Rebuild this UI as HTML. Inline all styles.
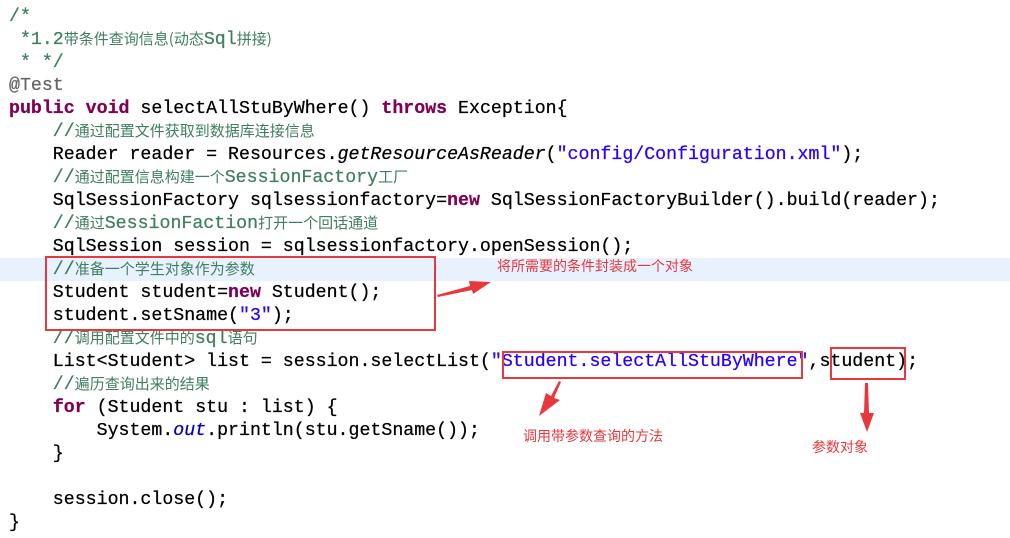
<!DOCTYPE html>
<html><head><meta charset="utf-8"><style>
body{margin:0;width:1010px;height:538px;background:#fff;overflow:hidden;position:relative;font-family:"Liberation Mono",monospace;}
.l{position:absolute;left:9px;height:23px;line-height:23px;font-size:18.25px;color:#000;white-space:pre;-webkit-text-stroke:0.25px currentColor}
.c{color:#3f7f5f}
.z{font-family:"Noto Sans CJK SC",sans-serif;font-size:15px;line-height:1;-webkit-text-stroke:0}
.k{color:#7f0055;font-weight:bold}
.s{color:#2a00ff}
.f{color:#0000c0;font-style:italic}
.hl{position:absolute;left:0;top:258px;width:1010px;height:23px;background:#e8f2fe}
.box{position:absolute;border:2px solid #e8383d}
.a{position:absolute;color:#e8383d;font-family:"Noto Sans CJK SC",sans-serif;font-size:14px}
</style></head><body>
<div class="hl"></div>
<div class="l c" style="top:6px">/*</div>
<div class="l c" style="top:29px"> *1.2<span class="z">带条件查询信息(动态</span>Sql<span class="z">拼接)</span></div>
<div class="l c" style="top:52px"> * */</div>
<div class="l" style="top:75px;color:#646464">@Test</div>
<div class="l" style="top:98px"><span class="k">public</span> <span class="k">void</span> selectAllStuByWhere() <span class="k">throws</span> Exception{</div>
<div class="l c" style="top:121px">    //<span class="z">通过配置文件获取到数据库连接信息</span></div>
<div class="l" style="top:144px">    Reader reader = Resources.<i>getResourceAsReader</i>(<span class="s">"config/Configuration.xml"</span>);</div>
<div class="l c" style="top:167px">    //<span class="z">通过配置信息构建一个</span>SessionFactory<span class="z">工厂</span></div>
<div class="l" style="top:190px">    SqlSessionFactory sqlsessionfactory=<span class="k">new</span> SqlSessionFactoryBuilder().build(reader);</div>
<div class="l c" style="top:213px">    //<span class="z">通过</span>SessionFaction<span class="z">打开一个回话通道</span></div>
<div class="l" style="top:236px">    SqlSession session = sqlsessionfactory.openSession();</div>
<div class="l c" style="top:259px">    //<span class="z">准备一个学生对象作为参数</span></div>
<div class="l" style="top:282px">    Student student=<span class="k">new</span> Student();</div>
<div class="l" style="top:305px">    student.setSname(<span class="s">"3"</span>);</div>
<div class="l c" style="top:328px">    //<span class="z">调用配置文件中的</span>sql<span class="z">语句</span></div>
<div class="l" style="top:351px">    List&lt;Student&gt; list = session.selectList(<span class="s">"Student.selectAllStuByWhere"</span>,student);</div>
<div class="l c" style="top:374px">    //<span class="z">遍历查询出来的结果</span></div>
<div class="l" style="top:397px">    <span class="k">for</span> (Student stu : list) {</div>
<div class="l" style="top:420px">        System.<span class="f">out</span>.println(stu.getSname());</div>
<div class="l" style="top:443px">    }</div>
<div class="l" style="top:489px">    session.close();</div>
<div class="l" style="top:512px">}</div>
<div class="box" style="left:45px;top:256px;width:387px;height:71px"></div>
<div class="box" style="left:502px;top:351px;width:297px;height:24px"></div>
<div class="box" style="left:830px;top:347px;width:72px;height:29px"></div>
<div class="a" style="left:497px;top:256px">将所需要的条件封装成一个对象</div>
<div class="a" style="left:523px;top:426px">调用带参数查询的方法</div>
<div class="a" style="left:812px;top:437px">参数对象</div>
<svg style="position:absolute;left:0;top:0" width="1010" height="538">
<polygon fill="#e8383d" points="437,295 470,286 469,281 491,282 473,294 472,290 438,297"/>
<polygon fill="#e8383d" points="561,382 554,398 560,400 539,416 546,393 551,396 559,381"/>
<polygon fill="#e8383d" points="865,383 868,383 869,413 874,413 867,432 860,413 864,413"/>
</svg>
</body></html>
